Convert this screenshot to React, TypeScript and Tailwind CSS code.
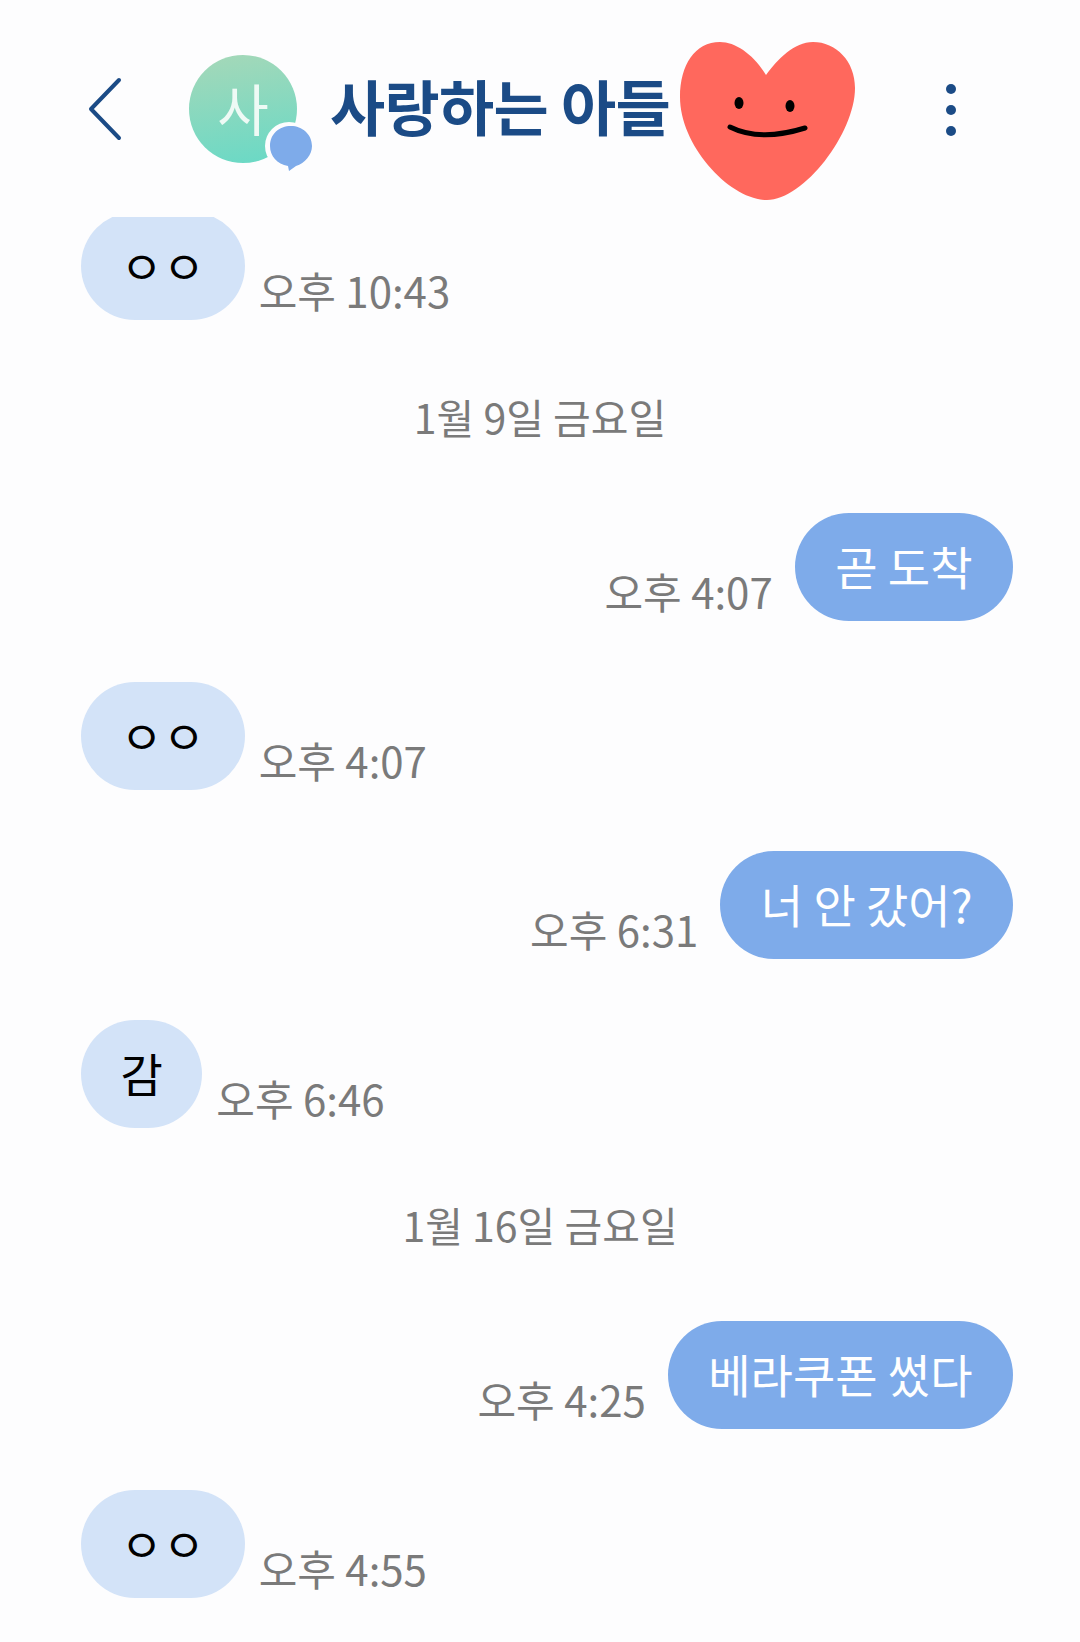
const font = { fontFamily: '"Noto Sans CJK KR", "Noto Sans", sans-serif' };

type Msg =
  | { kind: 'date'; text: string }
  | { kind: 'in' | 'out'; text: string; time: string };

const messages: Msg[] = [
  { kind: 'date', text: '1월 9일 금요일' },
  { kind: 'out', text: '곧 도착', time: '오후 4:07' },
  { kind: 'in', text: 'ㅇㅇ', time: '오후 4:07' },
  { kind: 'out', text: '너 안 갔어?', time: '오후 6:31' },
  { kind: 'in', text: '감', time: '오후 6:46' },
  { kind: 'date', text: '1월 16일 금요일' },
  { kind: 'out', text: '베라쿠폰 썼다', time: '오후 4:25' },
  { kind: 'in', text: 'ㅇㅇ', time: '오후 4:55' },
];

const Heart = () => (
  <svg viewBox="0 0 176 160" className="absolute left-[680px] top-[41px] h-[160px] w-[176px]">
    <path
      d="M86 34C74 14 56 1 40 1C15 1 0 24 0 56C0 105 50 159 87 159C124 159 175 92 175 47C175 20 156 1 133 1C114 1 98 18 86 34Z"
      fill="#ff685d"
    />
    <ellipse cx="59" cy="62" rx="4.5" ry="6" fill="#000" />
    <ellipse cx="110" cy="65" rx="4.5" ry="6" fill="#000" />
    <path d="M50 86C70 96 96 96 125 87" fill="none" stroke="#000" strokeWidth="5" strokeLinecap="round" />
  </svg>
);

const Header = () => (
  <header className="relative flex h-[217px] shrink-0 items-center pl-[88px]">
    <svg viewBox="0 0 34 64" className="h-[64px] w-[34px]">
      <path d="M31 3L3 32L31 61" fill="none" stroke="#1b4b86" strokeWidth="4" strokeLinecap="round" strokeLinejoin="round" />
    </svg>
    <div className="relative ml-[67px] h-[108px] w-[108px]">
      <div className="flex h-full w-full items-center justify-center rounded-full bg-linear-[170deg] from-[#a6d8b8] to-[#68d9c6] pb-[4px] text-[56px] text-[#eefaf5]">
        사
      </div>
      <svg viewBox="0 0 50 52" className="absolute left-[76px] top-[66px] h-[52px] w-[50px]">
        <circle cx="24" cy="25" r="24" fill="#fdfdfe" />
        <path d="M26 5C37 5 47 13 47 25C47 34 40 42 31 45L24 50L23 45C12 43 5 35 5 25C5 13 14 5 26 5Z" fill="#7eabea" />
      </svg>
    </div>
    <h1 className="mb-[7px] ml-[33px] text-[60px] leading-none font-bold tracking-[-0.7px] whitespace-nowrap text-[#1b4b86]">사랑하는 아들</h1>
    <Heart />
    <div className="absolute left-[946px] top-[84px] flex flex-col gap-[11px]">
      <span className="h-[10px] w-[10px] rounded-full bg-[#1b4b86]" />
      <span className="h-[10px] w-[10px] rounded-full bg-[#1b4b86]" />
      <span className="h-[10px] w-[10px] rounded-full bg-[#1b4b86]" />
    </div>
  </header>
);

const Time = ({ text }: { text: string }) => (
  <span className="pb-[7px] text-[42px] leading-[46px] whitespace-nowrap text-[#7a7a7a]">{text}</span>
);

const Bubble = ({ text, out }: { text: string; out?: boolean }) => (
  <div
    className={
      out
        ? 'flex h-[108px] items-center rounded-[54px] bg-[#7eabea] px-[40.5px] pb-[4px] text-[46px] whitespace-nowrap text-white'
        : 'flex h-[108px] items-center rounded-[54px] bg-[#d3e3f8] px-[39.5px] pb-[4px] text-[46px] whitespace-nowrap text-black'
    }
  >
    {text}
  </div>
);

const Row = ({ m }: { m: Msg }) => {
  if (m.kind === 'date') {
    return <div className="text-center text-[41px] leading-[71px] text-[#7a7a7a]">{m.text}</div>;
  }
  if (m.kind === 'out') {
    return (
      <div className="flex items-end justify-end gap-[22px] pr-[67px]">
        <Time text={m.time} />
        <Bubble text={m.text} out />
      </div>
    );
  }
  return (
    <div className="flex items-end gap-[14px] pl-[81px]">
      <Bubble text={m.text} />
      <Time text={m.time} />
    </div>
  );
};

export default function App() {
  return (
    <div className="flex h-[1642px] w-[1080px] flex-col overflow-hidden bg-[#fdfdfe]" style={font}>
      <Header />
      <div className="flex flex-1 flex-col gap-[61px] overflow-hidden">
        <div className="-mt-[5px] flex h-[108px] items-end gap-[14px] pl-[81px]">
          <Bubble text="ㅇㅇ" />
          <Time text="오후 10:43" />
        </div>
        {messages.map((m, i) => (
          <Row key={i} m={m} />
        ))}
      </div>
    </div>
  );
}
